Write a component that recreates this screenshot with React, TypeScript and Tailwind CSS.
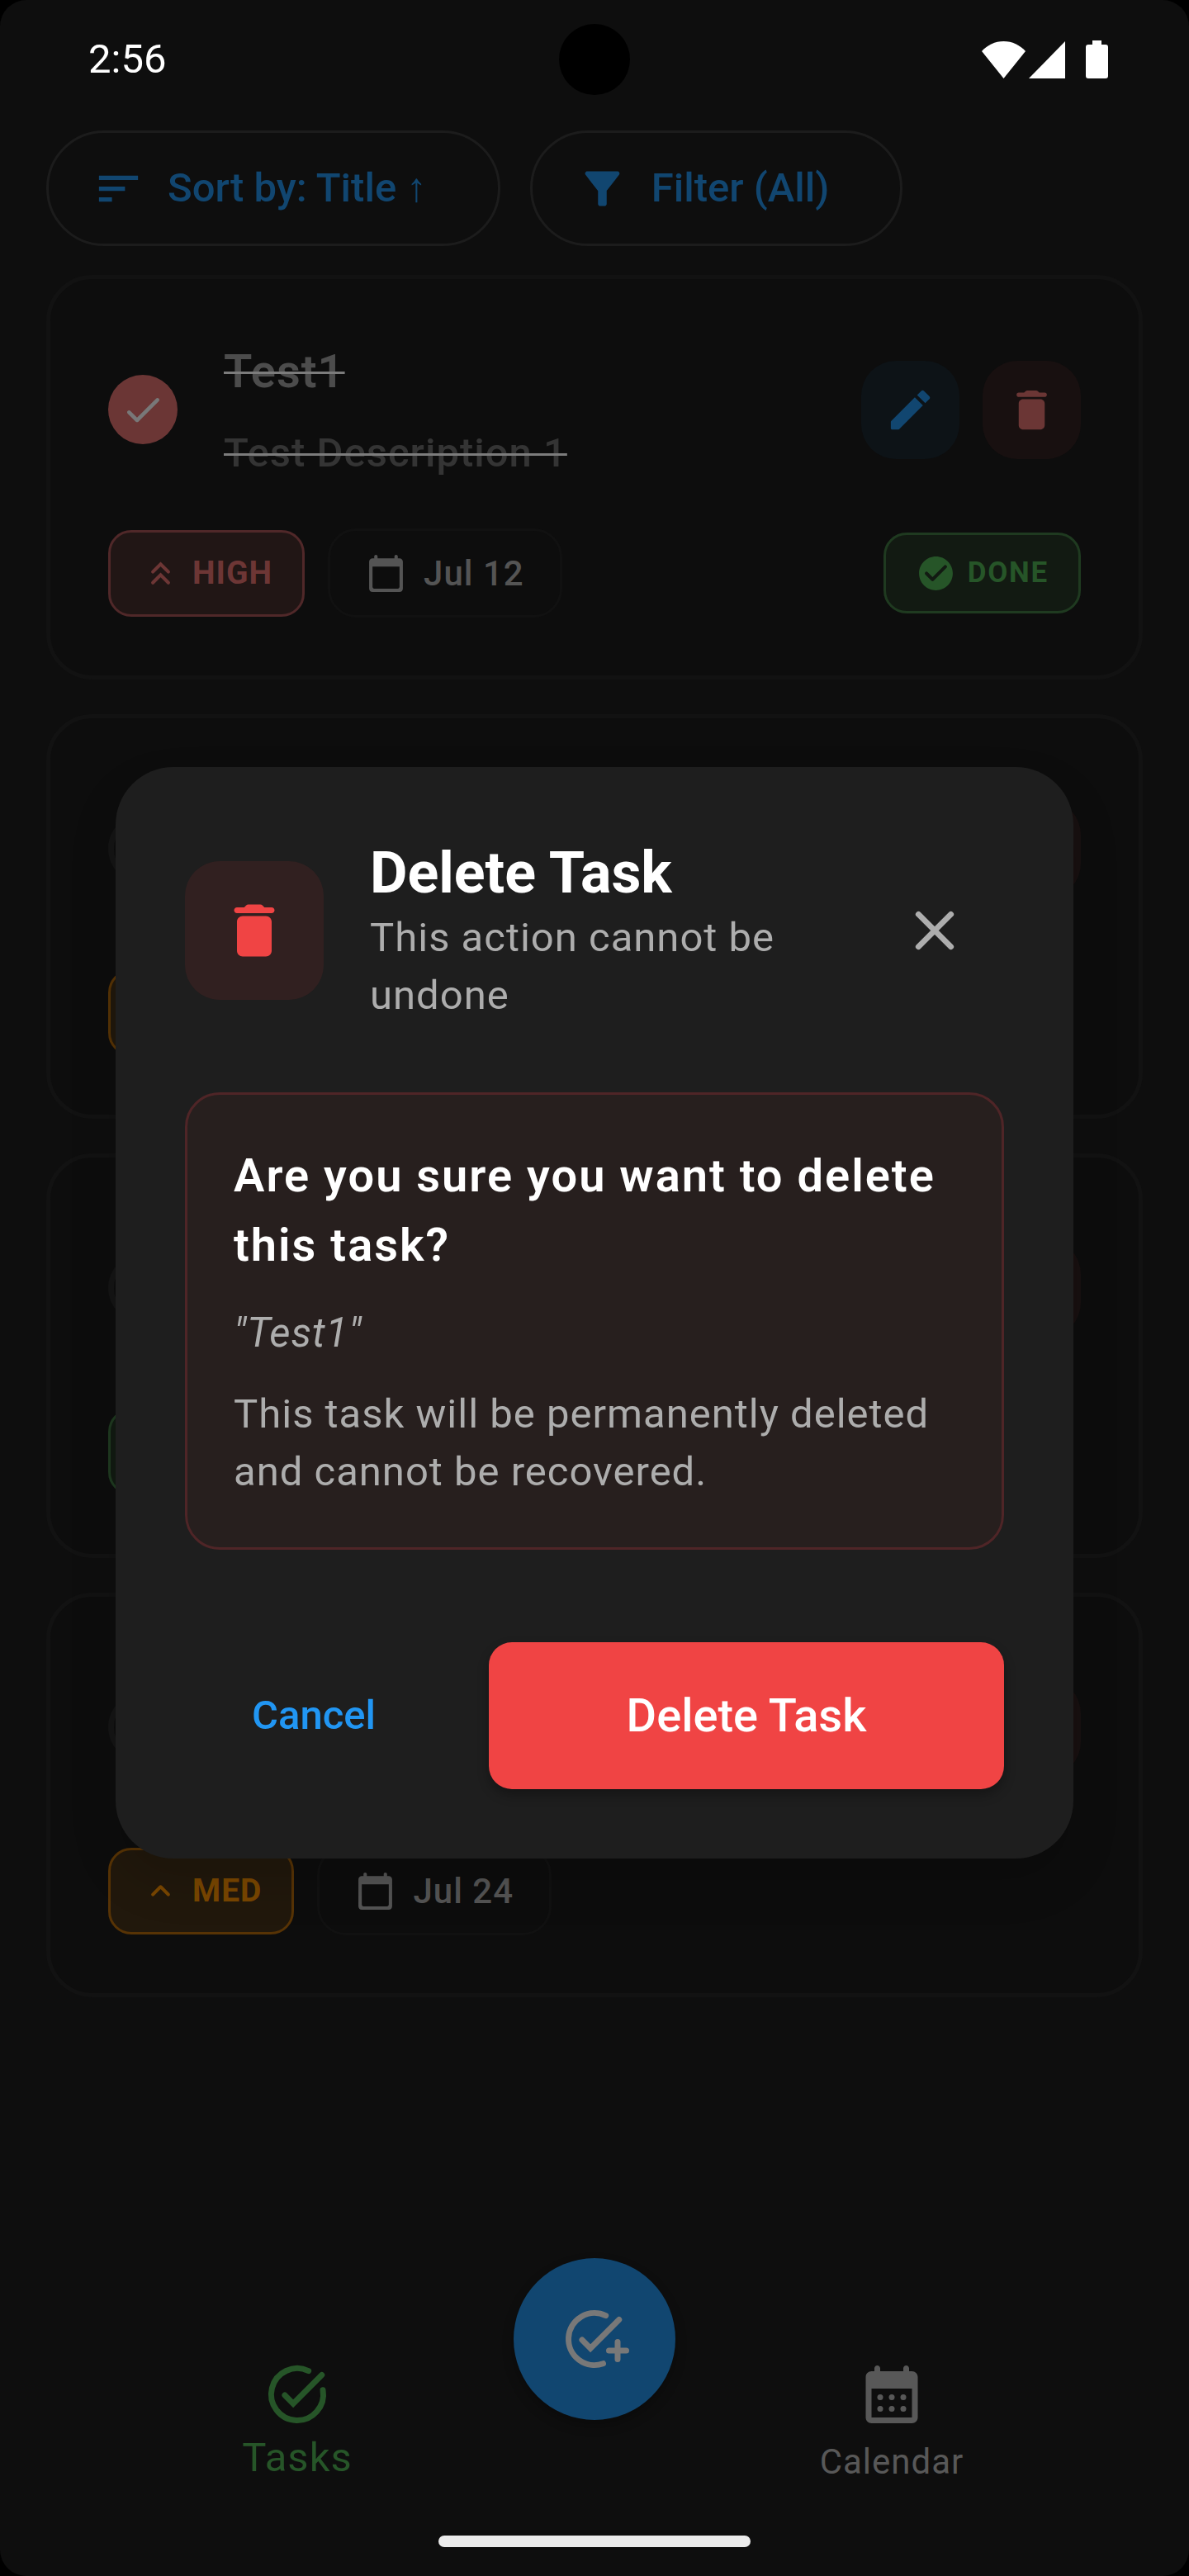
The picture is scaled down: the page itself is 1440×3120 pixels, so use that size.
import type { ReactNode } from "react";
import { MdFilterAlt, MdSort } from "react-icons/md";

type Tone = "high" | "med" | "low";

type Task = {
  id: number;
  title?: string;
  description?: string;
  done?: boolean;
  tone: Tone;
  priority?: string;
  date?: string;
};

const tasks: Task[] = [
  { id: 1, title: "Test1", description: "Test Description 1", done: true, tone: "high", priority: "HIGH", date: "Jul 12" },
  { id: 2, tone: "med" },
  { id: 3, tone: "low" },
  { id: 4, tone: "med", priority: "MED", date: "Jul 24" },
];

const chipTone: Record<Tone, string> = {
  high: "border-[#502829] bg-[#211615] text-[#6d3635]",
  med: "border-[#573305] bg-[#21180c] text-[#794600]",
  low: "border-[#1f3a20] bg-[#121a12] text-[#265528]",
};

function Icon({ className, children }: { className: string; children: ReactNode }) {
  return (
    <svg viewBox="0 0 24 24" fill="currentColor" className={className} aria-hidden="true">
      {children}
    </svg>
  );
}

function LineIcon({ className, children }: { className: string; children: ReactNode }) {
  return (
    <svg
      viewBox="0 0 24 24"
      fill="none"
      stroke="currentColor"
      strokeWidth="2"
      strokeLinecap="round"
      className={className}
      aria-hidden="true"
    >
      {children}
    </svg>
  );
}

function TrashIcon({ className }: { className: string }) {
  return (
    <Icon className={className}>
      <path d="M6 19c0 1.1.9 2 2 2h8c1.1 0 2-.9 2-2V9c0-1.1-.9-2-2-2H8c-1.1 0-2 .9-2 2v10zM18 4h-2.5l-.71-.71c-.18-.18-.44-.29-.7-.29H9.91c-.26 0-.52.11-.7.29L8.5 4H6c-.55 0-1 .45-1 1s.45 1 1 1h12c.55 0 1-.45 1-1s-.45-1-1-1z" />
    </Icon>
  );
}

function PriorityIcon({ tone }: { tone: Tone }) {
  if (tone === "high") {
    return (
      <LineIcon className="size-[49px] shrink-0">
        <path d="M7.4 11.1 12 6.5l4.6 4.6M7.4 17.5l4.6-4.6 4.6 4.6" />
      </LineIcon>
    );
  }
  return (
    <Icon className="size-[49px] shrink-0">
      <path d="M11.29 8.71 6.7 13.3c-.39.39-.39 1.02 0 1.41.39.39 1.02.39 1.41 0L12 10.83l3.88 3.88c.39.39 1.02.39 1.41 0 .39-.39.39-1.02 0-1.41L12.7 8.71c-.38-.39-1.02-.39-1.41 0z" />
    </Icon>
  );
}

function StatusBar() {
  return (
    <header className="relative flex h-[144px] items-center justify-between pr-[98px] pl-[107px] text-white">
      <time className="text-[49px] leading-[58px]">2:56</time>
      <div className="absolute top-[29px] left-1/2 size-[86px] -translate-x-1/2 rounded-full bg-black" />
      <div className="flex items-end">
        <svg viewBox="0 0 53 45" className="h-[45px] w-[53px]" fill="currentColor" aria-hidden="true">
          <path d="M26.500 45 0 12C7 4.500 16 0 26.500 0S46 4.500 53 12z" />
        </svg>
        <svg viewBox="0 0 44 45" className="ml-1 h-[45px] w-[44px]" fill="currentColor" aria-hidden="true">
          <path d="M44 0v45H0z" />
        </svg>
        <svg viewBox="0 0 27 46" className="ml-[25px] h-[46px] w-[27px]" fill="currentColor" aria-hidden="true">
          <path d="M8 0h11v5h5a3 3 0 0 1 3 3v35a3 3 0 0 1-3 3H3a3 3 0 0 1-3-3V8a3 3 0 0 1 3-3h5z" />
        </svg>
      </div>
    </header>
  );
}

function PillButton({ icon, children }: { icon: ReactNode; children: ReactNode }) {
  return (
    <button
      type="button"
      className="flex h-[140px] items-center gap-7 rounded-full border-[3px] border-[#1c1c1c] pr-[86px] pl-[53px] text-[49px] font-medium text-[#114670]"
    >
      {icon}
      <span>{children}</span>
    </button>
  );
}

function TaskCard({ task }: { task: Task }) {
  return (
    <li className="rounded-[56px] border-[5px] border-[#121212] bg-[#0d0d0d] p-[70px]">
      <div className="flex min-h-[176px] items-center">
        {task.done ? (
          <button
            type="button"
            aria-label="Mark as not done"
            className="flex size-[84px] shrink-0 items-center justify-center rounded-full bg-[#6b3635] text-[#787878]"
          >
            <Icon className="size-14">
              <path d="M9 16.170 5.530 12.700c-.39-.39-1.020-.39-1.410 0-.39.39-.39 1.020 0 1.410l4.180 4.180c.39.39 1.020.39 1.410 0L20.290 7.710c.39-.39.39-1.020 0-1.410-.39-.39-1.020-.39-1.410 0L9 16.170z" />
            </Icon>
          </button>
        ) : (
          <button
            type="button"
            aria-label="Mark as done"
            className="size-[84px] shrink-0 rounded-full border-[7px] border-[#151515]"
          />
        )}
        <div className="ml-14 flex-1">
          {task.title && (
            <h2 className="text-[56px] leading-[84px] font-semibold tracking-[1px] text-[#4c4c4c] line-through decoration-[#7c7c7c] decoration-[3px]">
              {task.title}
            </h2>
          )}
          {task.description && (
            <p className="mt-[22px] text-[49px] leading-[70px] font-medium tracking-[1px] text-[#343434] line-through decoration-[#7c7c7c] decoration-[3px]">
              {task.description}
            </p>
          )}
        </div>
        <div className="flex gap-7">
          <button
            type="button"
            aria-label="Edit task"
            className="flex size-[119px] items-center justify-center rounded-[42px] bg-[#0d1317] text-[#114670]"
          >
            <Icon className="size-[63px]">
              <path d="M3 17.460v3.040c0 .28.22.5.5.5h3.040c.13 0 .26-.05.35-.15L17.810 9.940l-3.750-3.750L3.150 17.100c-.1.1-.15.22-.15.360zM20.710 7.040a.996.996 0 0 0 0-1.410l-2.340-2.340a.996.996 0 0 0-1.410 0l-1.830 1.830 3.750 3.750 1.830-1.830z" />
            </Icon>
          </button>
          <button
            type="button"
            aria-label="Delete task"
            className="flex size-[119px] items-center justify-center rounded-[42px] bg-[#181010] text-[#6b3635]"
          >
            <TrashIcon className="size-[63px]" />
          </button>
        </div>
      </div>
      <div className="mt-14 flex h-[108px] items-center gap-7">
        <span
          className={`flex h-[105px] items-center gap-3.5 rounded-[28px] border-[3px] px-9 text-[39px] font-bold tracking-[1px] ${chipTone[task.tone]}`}
        >
          <PriorityIcon tone={task.tone} />
          {task.priority}
        </span>
        {task.date && (
          <span className="flex h-[108px] items-center gap-[21px] rounded-[35px] border-[3px] border-[#111111] px-[43px] text-[42px] font-medium tracking-[1px] text-[#545454]">
            <Icon className="size-[49px] shrink-0">
              <path d="M20 3h-1V2c0-.55-.45-1-1-1s-1 .45-1 1v1H7V2c0-.55-.45-1-1-1s-1 .45-1 1v1H4c-1.100 0-2 .9-2 2v16c0 1.100.9 2 2 2h16c1.100 0 2-.9 2-2V5c0-1.100-.9-2-2-2zm-1 18H5c-.55 0-1-.45-1-1V8h16v12c0 .55-.45 1-1 1z" />
            </Icon>
            {task.date}
          </span>
        )}
        {task.done && (
          <span className="ml-auto flex h-[98px] items-center gap-3.5 rounded-[28px] border-[3px] border-[#1f3a20] bg-[#121a12] px-9 text-[35px] font-bold tracking-wider text-[#265528]">
            <Icon className="size-[49px] shrink-0">
              <path d="M12 2C6.480 2 2 6.480 2 12s4.480 10 10 10 10-4.480 10-10S17.520 2 12 2zM9.290 16.290 5.700 12.700a.996.996 0 1 1 1.410-1.410L10 14.170l6.880-6.880a.996.996 0 1 1 1.410 1.410l-7.590 7.590a.996.996 0 0 1-1.410 0z" />
            </Icon>
            DONE
          </span>
        )}
      </div>
    </li>
  );
}

function BottomNav() {
  return (
    <nav className="relative mt-auto grid grid-cols-2 pb-[65px]">
      <a href="#tasks" className="flex flex-col items-center text-[#265528]">
        <LineIcon className="size-[84px]">
          <path d="M15.900 3.890A9 9 0 1 0 20.870 10.500" />
          <path d="M7.700 12.300l2.900 2.900L20.500 5.300" />
        </LineIcon>
        <span className="flex h-16 items-end text-[49px] leading-[58px] tracking-[1px]">Tasks</span>
      </a>
      <a href="#calendar" className="flex flex-col items-center text-[#585858]">
        <Icon className="size-[84px]">
          <path
            fillRule="evenodd"
            d="M19 4h-1V3c0-.55-.45-1-1-1s-1 .45-1 1v1H8V3c0-.55-.45-1-1-1s-1 .45-1 1v1H5c-1.110 0-2 .9-2 2v14c0 1.100.89 2 2 2h14c1.100 0 2-.9 2-2V6c0-1.100-.9-2-2-2zM5 10h14v10H5z"
          />
          <circle cx="8" cy="13" r="1" />
          <circle cx="12" cy="13" r="1" />
          <circle cx="16" cy="13" r="1" />
          <circle cx="8" cy="17" r="1" />
          <circle cx="12" cy="17" r="1" />
          <circle cx="16" cy="17" r="1" />
        </Icon>
        <span className="flex h-16 items-end text-[42px] leading-[49px] tracking-[1px]">Calendar</span>
      </a>
      <button
        type="button"
        aria-label="Add task"
        className="absolute -top-[123px] left-1/2 flex size-[196px] -translate-x-1/2 items-center justify-center rounded-full bg-[#114670] text-[#787878] shadow-[0_7px_14px_rgba(0,0,0,0.25)]"
      >
        <LineIcon className="size-[84px] overflow-visible">
          <path d="M15.900 3.890A9 9 0 1 0 15 20.490" />
          <path d="M7.700 12.300l2.900 2.900L20.500 5.300" />
          <path d="M20 13v6M17 16h6" />
        </LineIcon>
      </button>
    </nav>
  );
}

function DeleteDialog() {
  return (
    <div className="absolute inset-0 flex items-center justify-center px-[140px] pt-[144px] pb-[84px]">
      <section
        role="dialog"
        aria-modal="true"
        aria-labelledby="dialog-title"
        className="w-full rounded-[70px] bg-[#1e1e1e] p-[84px] shadow-[0_28px_56px_rgba(0,0,0,0.15)]"
      >
        <div className="flex items-center">
          <div className="flex size-[168px] shrink-0 items-center justify-center rounded-[42px] bg-[#312020] text-[#f04444]">
            <TrashIcon className="size-[84px]" />
          </div>
          <div className="ml-14 flex-1">
            <h1 id="dialog-title" className="text-[70px] leading-[88px] font-bold text-white">
              Delete Task
            </h1>
            <p className="text-[49px] leading-[70px] tracking-[1px] text-[#adadad]">This action cannot be undone</p>
          </div>
          <button
            type="button"
            aria-label="Close"
            className="flex size-[168px] shrink-0 items-center justify-center text-[#adadad]"
          >
            <LineIcon className="size-[84px]">
              <path d="m6.400 6.400 11.200 11.200M17.600 6.400 6.400 17.600" />
            </LineIcon>
          </button>
        </div>
        <div className="mt-[82px] rounded-[42px] border-[3px] border-[#4f2527] bg-[#271f1e] p-14">
          <p className="text-[56px] leading-[84px] font-semibold tracking-[2px] text-white">
            Are you sure you want to delete this task?
          </p>
          <p className="mt-[30px] text-[49px] leading-[70px] tracking-[1px] text-[#adadad] italic">"Test1"</p>
          <p className="mt-7 text-[49px] leading-[70px] tracking-[1px] text-[#adadad]">
            This task will be permanently deleted and cannot be recovered.
          </p>
        </div>
        <div className="mt-28 flex gap-14">
          <button type="button" className="h-[178px] flex-1 text-[49px] font-medium text-[#2196f3]">
            Cancel
          </button>
          <button
            type="button"
            className="h-[178px] flex-2 rounded-[28px] bg-[#f04444] text-[56px] font-medium text-white shadow-[0_7px_14px_rgba(0,0,0,0.3)]"
          >
            Delete Task
          </button>
        </div>
      </section>
    </div>
  );
}

export default function App() {
  return (
    <div className="min-h-screen bg-black font-[Roboto,sans-serif]">
      <div className="relative flex min-h-screen flex-col overflow-hidden rounded-[32px] bg-[#0e0e0e]">
        <StatusBar />
        <main className="px-14 pt-3.5">
          <div className="flex gap-9">
            <PillButton icon={<MdSort className="size-[63px]" />}>Sort by: Title ↑</PillButton>
            <PillButton icon={<MdFilterAlt className="size-[63px]" />}>Filter (All)</PillButton>
          </div>
          <ul className="mt-[35px] flex flex-col gap-[42px]">
            {tasks.map((task) => (
              <TaskCard key={task.id} task={task} />
            ))}
          </ul>
        </main>
        <BottomNav />
        <div className="mx-auto mb-[35px] h-3.5 w-[378px] rounded-full bg-[#ebebeb]" />
        <DeleteDialog />
      </div>
    </div>
  );
}
